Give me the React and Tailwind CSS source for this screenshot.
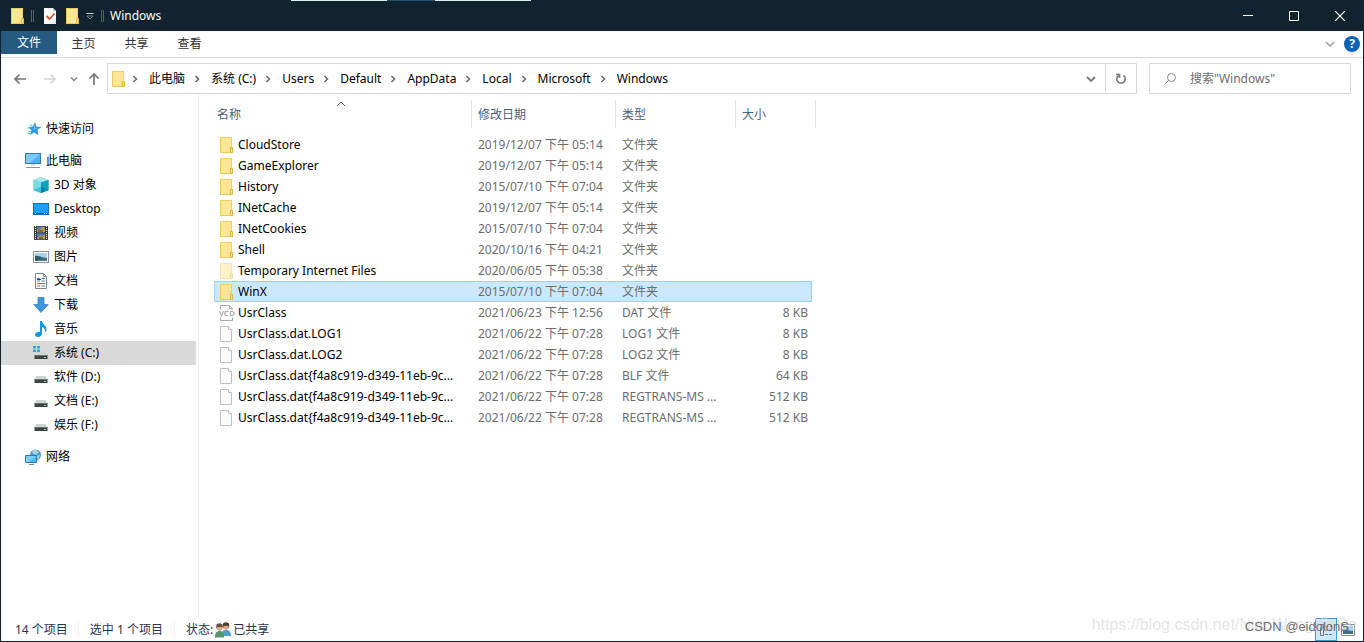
import { Fragment, useState } from 'react';

const places = [
  { name: '3D 对象', icon: 'cube' },
  { name: 'Desktop', icon: 'desktop' },
  { name: '视频', icon: 'video' },
  { name: '图片', icon: 'picture' },
  { name: '文档', icon: 'document' },
  { name: '下载', icon: 'download' },
  { name: '音乐', icon: 'music' },
  { name: '系统 (C:)', icon: 'system' },
  { name: '软件 (D:)', icon: 'drive' },
  { name: '文档 (E:)', icon: 'drive' },
  { name: '娱乐 (F:)', icon: 'drive' },
];

const crumbs = ['此电脑', '系统 (C:)', 'Users', 'Default', 'AppData', 'Local', 'Microsoft', 'Windows'];

const files = [
  { name: 'CloudStore', date: '2019/12/07 下午 05:14', type: '文件夹', size: '', icon: 'folder' },
  { name: 'GameExplorer', date: '2019/12/07 下午 05:14', type: '文件夹', size: '', icon: 'folder' },
  { name: 'History', date: '2015/07/10 下午 07:04', type: '文件夹', size: '', icon: 'folder' },
  { name: 'INetCache', date: '2019/12/07 下午 05:14', type: '文件夹', size: '', icon: 'folder' },
  { name: 'INetCookies', date: '2015/07/10 下午 07:04', type: '文件夹', size: '', icon: 'folder' },
  { name: 'Shell', date: '2020/10/16 下午 04:21', type: '文件夹', size: '', icon: 'folder' },
  { name: 'Temporary Internet Files', date: '2020/06/05 下午 05:38', type: '文件夹', size: '', icon: 'hidden' },
  { name: 'WinX', date: '2015/07/10 下午 07:04', type: '文件夹', size: '', icon: 'folder' },
  { name: 'UsrClass', date: '2021/06/23 下午 12:56', type: 'DAT 文件', size: '8 KB', icon: 'vcd' },
  { name: 'UsrClass.dat.LOG1', date: '2021/06/22 下午 07:28', type: 'LOG1 文件', size: '8 KB', icon: 'file' },
  { name: 'UsrClass.dat.LOG2', date: '2021/06/22 下午 07:28', type: 'LOG2 文件', size: '8 KB', icon: 'file' },
  { name: 'UsrClass.dat{f4a8c919-d349-11eb-9c...', date: '2021/06/22 下午 07:28', type: 'BLF 文件', size: '64 KB', icon: 'file' },
  { name: 'UsrClass.dat{f4a8c919-d349-11eb-9c...', date: '2021/06/22 下午 07:28', type: 'REGTRANS-MS ...', size: '512 KB', icon: 'file' },
  { name: 'UsrClass.dat{f4a8c919-d349-11eb-9c...', date: '2021/06/22 下午 07:28', type: 'REGTRANS-MS ...', size: '512 KB', icon: 'file' },
];

function Folder({ className = '' }) {
  return (
    <svg className={`w-4 h-4 shrink-0 ${className}`} viewBox="0 0 16 16">
      <path d="M1 0h12v10.500h1V16H1z" fill="#fbdc78" />
      <path d="M1.500.500h11V11" fill="none" stroke="#f3cf5f" />
      <path d="M2 1h10v9.500l-1 .500v4H2z" fill="#ffe694" />
      <path d="M11.500 15.500v-5h2v5z" fill="#fde18a" stroke="#dfb443" />
      <path d="M1.500 1v14.500H12" fill="none" stroke="#efc75a" />
    </svg>
  );
}

function FileIcon({ type }) {
  if (type === 'folder') return <Folder />;
  if (type === 'hidden') return <Folder className="opacity-50" />;
  if (type === 'vcd') {
    return (
      <svg className="w-4 h-4 shrink-0" viewBox="0 0 16 16" fill="none" stroke="#adadad">
        <path d="M1.500 4.500v-4h9l3 3v1M10.500.500v3h3M1.500 12.500v3h12v-3" />
        <path d="M.500 6l2 5 2-5M9.500 6.500h-3l-.500.500v3l.500.500h3M11.500 6.500h2l1.500 1v2l-1.500 1h-2z" strokeWidth="1.200" />
      </svg>
    );
  }
  return (
    <svg className="w-4 h-4 shrink-0" viewBox="0 0 16 16" fill="#fcfcfc" stroke="#c0c0c0">
      <path d="M1.500.500h8l3 3v12h-11z" />
      <path d="M9.500.500v3h3" />
    </svg>
  );
}

function PlaceIcon({ type }) {
  return (
    <svg className="w-4 h-4 shrink-0" viewBox="0 0 16 16">
      {type === 'star' && (
        <>
          <path d="M10 2l1 4 4.500.300-3.500 2.500 1 4.700-3.800-2.500L5.500 13.500l1.300-4.200L4 6.500l4-.500z" fill="#2a9be8" stroke="#1b7cc4" strokeWidth=".6" />
          <path d="M4.500 4h3M2.500 7h2.500M3.500 10.500h2.500M2.500 12.500h2.500" stroke="#5fb4ec" strokeWidth=".9" />
          <path d="M9.800 3.800l.6 3 2.300.200-4.200 1.800z" fill="#65c1f5" />
        </>
      )}
      {type === 'pc' && (
        <>
          <rect x=".5" y=".5" width="15" height="10" fill="#4cb2f5" stroke="#397ca8" />
          <path d="M1 1h14L5 10H1z" fill="#7ccbfc" />
          <path d="M6 11h4v2H6z" fill="#d9e2e7" />
          <path d="M1 14.500h14" stroke="#8798a3" />
        </>
      )}
      {type === 'cube' && (
        <>
          <path d="M8 0l7.500 3v10L8 16 .500 13V3z" fill="#36bed3" />
          <path d="M8 0l7.500 3L8 5.500.500 3z" fill="#a8e5ea" />
          <path d="M.500 3L8 5.500V16L.500 13z" fill="#7edbe3" />
          <path d="M8 5.500L15.500 3v10L8 16z" fill="#12a0bf" />
          <path d="M.500 13L8 9.500V16z" fill="#45c3d4" />
          <path d="M8 9.500l7.500 3.500L8 16z" fill="#0788aa" />
        </>
      )}
      {type === 'desktop' && (
        <>
          <rect x=".5" y="2.500" width="15" height="11" fill="#18a0fb" stroke="#176fae" />
          <path d="M1 12.500h14" stroke="#075e9c" />
          <path d="M2 12.500h1M11 12.500h1M13 12.500h1" stroke="#fff" />
        </>
      )}
      {type === 'video' && (
        <>
          <path d="M1 1h14v14H1z" fill="#3d3d3d" />
          <path d="M2.500 1v14M13.500 1v14" stroke="#eee" strokeDasharray="1 1" />
          <path d="M4 1.500h8v6H4zM4 8.500h8v6H4z" fill="#547ab8" />
          <path d="M4 7V4l3 1 2-3 3 1v4zM4 14l3-4 2 2 3-3v5z" fill="#c79b35" />
          <path d="M5 6h5M6 13h4" stroke="#342c4a" />
        </>
      )}
      {type === 'picture' && (
        <>
          <rect x=".5" y="2.500" width="15" height="11" fill="#fff" stroke="#8c9398" />
          <path d="M2 4h12v8H2z" fill="#a6d4ee" />
          <path d="M2 7c4-1 7 2 12 2v3H2z" fill="#49728b" />
          <path d="M2 7c4 0 5 2 8 3l-8 1z" fill="#315a59" />
        </>
      )}
      {type === 'document' && (
        <>
          <path d="M2.500.500h8l3 3v12h-11z" fill="#fff" stroke="#80878c" />
          <path d="M10.500.500v3h3" fill="none" stroke="#80878c" />
          <path d="M4 5.500h3M8.500 5.500H12M4 8h3M8.500 8H12M4 10.500h8M4 13h3M8.500 13H12" stroke="#348bd1" />
          <path d="M4 6.500h4" stroke="#174c80" />
        </>
      )}
      {type === 'download' && (
        <path d="M5 .500h6v7h4.300L8 15.500.700 7.500H5z" fill="#3e96dd" stroke="#2b78bd" strokeWidth=".7" />
      )}
      {type === 'music' && (
        <path d="M7 0h2c0 3 4.500 4 4.500 8 0 1.500-.500 2.500-1.500 3.500C12.500 8 11 6.500 9 6v6.500C9 14.500 7 16 5 16s-3-1-3-2.500S4 10.500 7 11z" fill="#0c99e8" />
      )}
      {(type === 'drive' || type === 'system') && (
        <>
          <path d="M3.500 7h9l2 3H1.500z" fill="#d2d4d5" />
          <path d="M1.500 10h13v4h-13z" fill="#3d4545" />
          <path d="M1.500 10.500h13" stroke="#6a7070" />
          <path d="M11 12.500h2" stroke="#63dd79" />
        </>
      )}
      {type === 'system' && (
        <path d="M0 1h3v2.500H0zM4 1h3v2.500H4zM0 4.500h3V7H0zM4 4.500h3V7H4z" fill="#16b2e5" />
      )}
      {type === 'network' && (
        <>
          <circle cx="10.500" cy="6" r="5.500" fill="#4d9ac0" />
          <path d="M7 2c3-2 5-1 7 1l-3 3-3-1zM11 7l4-1-2 5z" fill="#a6d6e4" />
          <path d="M.500 6.500h11v7H.500z" fill="#4eb8f6" stroke="#2e78ad" />
          <path d="M1 7h10l-7 6H1z" fill="#7dcffb" />
          <path d="M4 15.500h5" stroke="#5f8dab" />
        </>
      )}
    </svg>
  );
}

function Chevron({ className }) {
  return (
    <svg className={`shrink-0 ${className}`} viewBox="0 0 8 8" fill="none" stroke="currentColor" strokeWidth="1.500">
      <path d="M2.500 1L5.500 4 2.500 7" />
    </svg>
  );
}

function TitleBar() {
  return (
    <header className="relative flex h-[31px] items-center bg-[#10232f] text-white">
      {/* Edge of the window behind */}
      <div className="absolute left-[290px] top-0 flex h-px">
        <span className="w-24 bg-[#d5eef0]" />
        <span className="w-12 bg-[#24506f]" />
        <span className="w-24 bg-[#d5eef0]" />
      </div>
      <Folder className="ml-[9px]" />
      <span className="ml-[5px] h-3 w-[3px] border-x border-[#56636c]" />
      <button aria-label="属性" className="ml-[9px]">
        <svg className="w-4 h-4" viewBox="0 0 16 16">
          <path d="M1 0h9l3 3v16H1z" fill="#fafafa" />
          <path d="M10 0v3h3" fill="#bcc2c6" />
          <path d="M3.500 8l3 3 5-5.500" fill="none" stroke="#e0532d" strokeWidth="1.800" />
        </svg>
      </button>
      <button aria-label="新建文件夹" className="ml-1.5">
        <Folder />
      </button>
      <button aria-label="自定义快速访问工具栏" className="ml-[5px]">
        <svg className="w-2 h-2" viewBox="0 0 8 8">
          <path d="M.500 1.500h7" stroke="#ccd2d5" />
          <path d="M1 4h6L4 7z" fill="#0b1318" stroke="#9aa3a9" strokeWidth=".7" />
        </svg>
      </button>
      <span className="ml-[7px] h-3 w-[3px] border-x border-[#56636c]" />
      <h1 className="ml-1.5 leading-4">Windows</h1>
      <div className="ml-auto flex h-full">
        <button aria-label="最小化" className="flex w-[46px] items-center justify-center">
          <svg className="w-2.5 h-2.5" viewBox="0 0 10 10" stroke="#fff"><path d="M0 4.500h10" /></svg>
        </button>
        <button aria-label="最大化" className="flex w-[46px] items-center justify-center">
          <svg className="w-2.5 h-2.5" viewBox="0 0 10 10" stroke="#fff" fill="none"><path d="M.500.500h9v9h-9z" /></svg>
        </button>
        <button aria-label="关闭" className="flex w-[46px] items-center justify-center">
          <svg className="w-2.5 h-2.5" viewBox="0 0 10 10" stroke="#fff" strokeWidth="1.200"><path d="M0 0l10 10M10 0L0 10" /></svg>
        </button>
      </div>
    </header>
  );
}

function Ribbon() {
  return (
    <nav className="flex h-[27px] items-start border-b border-[#d9dadb] pr-[3px] text-[#333]">
      <button className="h-[23px] w-14 bg-[#265a80] text-white">文件</button>
      <button className="h-[26px] w-[53px]">主页</button>
      <button className="h-[26px] w-[53px]">共享</button>
      <button className="h-[26px] w-[53px]">查看</button>
      <button aria-label="展开功能区" className="ml-auto mr-[9px] mt-1 flex h-[18px] items-center text-[#999]">
        <svg className="h-2 w-2.5" viewBox="0 0 10 8" fill="none" stroke="currentColor" strokeWidth="1.300"><path d="M1 2l4 4 4-4" /></svg>
      </button>
      <button aria-label="帮助" className="mt-[5px] h-4 w-4 rounded-full bg-[#0964b8] text-xs font-bold leading-4 text-white">
        ?
      </button>
    </nav>
  );
}

function AddressBar() {
  const [query, setQuery] = useState('');

  return (
    <div className="flex h-[31px] mt-[5px] items-center pl-[11px] pr-3 text-black">
      <button aria-label="后退" className="text-[#777]">
        <svg className="w-4 h-4" viewBox="0 0 16 16" fill="none" stroke="currentColor" strokeWidth="1.700"><path d="M14 8H3M7.500 3.500L3 8l4.500 4.500" /></svg>
      </button>
      <button aria-label="前进" className="ml-3.5 text-[#d5d5d5]">
        <svg className="w-4 h-4" viewBox="0 0 16 16" fill="none" stroke="currentColor" strokeWidth="1.500"><path d="M2 8h11M8.500 3.500L13 8l-4.500 4.500" /></svg>
      </button>
      <button aria-label="最近浏览的位置" className="ml-3 text-[#858585]">
        <Chevron className="w-2 h-2 rotate-90" />
      </button>
      <button aria-label="上移" className="ml-2 text-[#777]">
        <svg className="w-4 h-4" viewBox="0 0 16 16" fill="none" stroke="currentColor" strokeWidth="1.700"><path d="M8 14V3M3.500 7.500L8 3l4.500 4.500" /></svg>
      </button>
      <div className="ml-[5px] flex h-full min-w-0 flex-1 items-center border border-[#d9d9d9] pl-[3px]">
        <Folder className="-mr-1" />
        {crumbs.map((crumb) => (
          <Fragment key={crumb}>
            <Chevron className="ml-2 mr-2.5 w-2 h-2 text-[#666]" />
            <a href="#" className="whitespace-nowrap">{crumb}</a>
          </Fragment>
        ))}
        <button aria-label="历史记录" className="ml-auto mr-[9px] text-[#777]">
          <svg className="h-2 w-2.5" viewBox="0 0 10 8" fill="none" stroke="currentColor" strokeWidth="1.800"><path d="M1 2l4 4 4-4" /></svg>
        </button>
        <button aria-label="刷新" className="flex h-full w-[31px] items-center justify-center border-l border-[#d9d9d9] text-[#777]">
          <svg className="h-3 w-3" viewBox="0 0 12 12" fill="none" stroke="currentColor" strokeWidth="1.600">
            <path d="M8.500 2.500A4.200 4.200 0 1 1 3.500 2.500" />
            <path d="M1 1.500h3.500V5" />
          </svg>
        </button>
      </div>
      <label className="ml-3 flex h-full w-[202px] items-center border border-[#d9d9d9] pl-3.5">
        <svg className="h-3 w-3 shrink-0" viewBox="0 0 12 12" fill="none" stroke="#888">
          <circle cx="7.500" cy="4.500" r="4" />
          <path d="M4.500 7.500L.500 11.500" />
        </svg>
        <input
          aria-label="搜索"
          className="ml-3.5 min-w-0 flex-1 outline-none placeholder:text-[#6d6d6d]"
          placeholder={'搜索"Windows"'}
          value={query}
          onChange={(e) => setQuery(e.target.value)}
        />
      </label>
    </div>
  );
}

function Sidebar() {
  return (
    <aside className="w-[198px] shrink-0 border-r border-[#f0f0f0] pt-[23px] text-black">
      <a href="#" className="flex h-6 items-center gap-[5px] pl-6">
        <PlaceIcon type="star" />
        快速访问
      </a>
      <a href="#" className="mt-2 flex h-6 items-center gap-[5px] pl-6">
        <PlaceIcon type="pc" />
        此电脑
      </a>
      {places.map((place) => (
        <a
          href="#"
          key={place.name}
          className={`mr-0.5 flex h-6 items-center gap-[5px] pl-8 ${place.icon === 'system' ? 'bg-[#d9d9d9]' : ''}`}
        >
          <PlaceIcon type={place.icon} />
          {place.name}
        </a>
      ))}
      <a href="#" className="mt-2 flex h-6 items-center gap-[5px] pl-6">
        <PlaceIcon type="network" />
        网络
      </a>
    </aside>
  );
}

function FileTable() {
  const [selected, setSelected] = useState(7);

  return (
    <table className="ml-[15px] w-[602px] table-fixed border-separate border-spacing-0 self-start text-left">
      <colgroup>
        <col className="w-[258px]" />
        <col className="w-36" />
        <col className="w-[120px]" />
        <col className="w-[76px]" />
        <col className="w-1" />
      </colgroup>
      <thead className="text-[#4c607a]">
        <tr className="h-7">
          <th className="relative border-r border-[#e5e5e5] pb-0 pl-[3px] pt-0.5 font-normal">
            <svg className="absolute left-[122px] top-0 h-2 w-2.5" viewBox="0 0 10 8" fill="none" stroke="#666"><path d="M1 6l4-4 4 4" /></svg>
            名称
          </th>
          <th className="border-r border-[#e5e5e5] pb-0 pl-1.5 pt-0.5 font-normal">修改日期</th>
          <th className="border-r border-[#e5e5e5] pb-0 pl-1.5 pt-0.5 font-normal">类型</th>
          <th colSpan={2} className="border-r border-[#e5e5e5] pb-0 pl-1.5 pt-0.5 font-normal">大小</th>
        </tr>
      </thead>
      <tbody className="text-[#6d6d6d] before:block before:h-1.5">
        {files.map((file, i) => {
          const cell = i === selected ? 'border-y border-[#99d1ff] bg-[#cce8ff]' : 'border-y border-transparent';
          return (
            <tr key={i} className="h-[21px] leading-[19px]" onClick={() => setSelected(i)}>
              <td className={`${cell} border-l p-0 pl-1 text-black`}>
                <div className="flex items-center gap-[3px] whitespace-nowrap">
                  <FileIcon type={file.icon} />
                  {file.name}
                </div>
              </td>
              <td className={`${cell} whitespace-nowrap p-0 pl-1.5`}>{file.date}</td>
              <td className={`${cell} whitespace-nowrap p-0 pl-1.5`}>{file.type}</td>
              <td className={`${cell} whitespace-nowrap border-r p-0 pr-[3px] text-right`}>{file.size}</td>
              <td className="p-0" />
            </tr>
          );
        })}
      </tbody>
    </table>
  );
}

function StatusBar() {
  return (
    <footer className="relative flex h-6 items-center pl-3.5 text-[#24344f]">
      <span className="pt-0.5">14 个项目</span>
      <span className="ml-2.5 border-l border-[#f3f3f3] pl-[11px] pt-0.5">选中 1 个项目</span>
      <span className="ml-[11px] flex items-center border-l border-[#f3f3f3] pl-[11px] pt-0.5">
        状态:
        <svg className="ml-0.5 h-4 w-4" viewBox="0 0 16 16">
          <circle cx="11" cy="3.500" r="3.300" fill="#594032" />
          <path d="M8.500 4h5v2.500l-2.500 2-2.500-2z" fill="#d9a989" />
          <path d="M6.500 14c0-4 1-6 4.500-6s5 2 5 6z" fill="#4f9ccd" />
          <circle cx="4.500" cy="4.500" r="3.300" fill="#6f5140" />
          <path d="M2 5h5v2.500l-2.500 2L2 7.500z" fill="#d7aa8b" />
          <path d="M0 15.500C0 11 1.500 9 4.500 9S9 11 9 15.500z" fill="#51976a" />
        </svg>
        <span className="ml-0.5">已共享</span>
      </span>

      {/* View switcher */}
      <div className="ml-auto flex h-full items-end pr-2">
        <button aria-label="详细信息" className="flex h-[23px] w-[22px] items-center justify-center border border-[#3b9bd0] bg-[#cce8fa]">
          <svg className="h-3.5 w-3.5" viewBox="0 0 14 14" stroke="#777" fill="none">
            <path d="M1.500 1.500h3v11h-3zM6 3.500h3M10 3.500h3M6 7h3M10 7h3M6 11.500h3M10 11.500h3" />
          </svg>
        </button>
        <button aria-label="大图标" className="ml-1 flex h-[23px] items-center">
          <svg className="h-3 w-3.5" viewBox="0 0 14 12">
            <path d="M.500.500h13v11H.500z" fill="#fff" stroke="#858c91" />
            <path d="M2 2h10v8H2z" fill="#8fc6e8" />
            <path d="M2 7c4-3 6 1 10 0v3H2z" fill="#3f6c89" />
          </svg>
        </button>
      </div>

      {/* Page stamps over the status bar */}
      <span className="pointer-events-none absolute bottom-1 right-1.5 whitespace-nowrap font-['Liberation_Sans'] text-base leading-6 text-[#dedede]/80">
        https://blog.csdn.net/NianWangXiaDe
      </span>
      <span className="pointer-events-none absolute bottom-1 right-3.5 whitespace-nowrap font-['Liberation_Sans'] text-[13px] leading-5 text-[#707070]">
        CSDN @eidolonS
      </span>
    </footer>
  );
}

function App() {
  return (
    <div className="flex min-h-screen flex-col border-x border-b border-[#10232f] bg-white font-['Noto_Sans','Noto_Sans_CJK_SC',sans-serif] text-xs">
      <TitleBar />
      <Ribbon />
      <AddressBar />
      <main className="flex flex-1">
        <Sidebar />
        <div className="min-w-0 flex-1 pt-1.5">
          <FileTable />
        </div>
      </main>
      <StatusBar />
    </div>
  );
}

export default App;
